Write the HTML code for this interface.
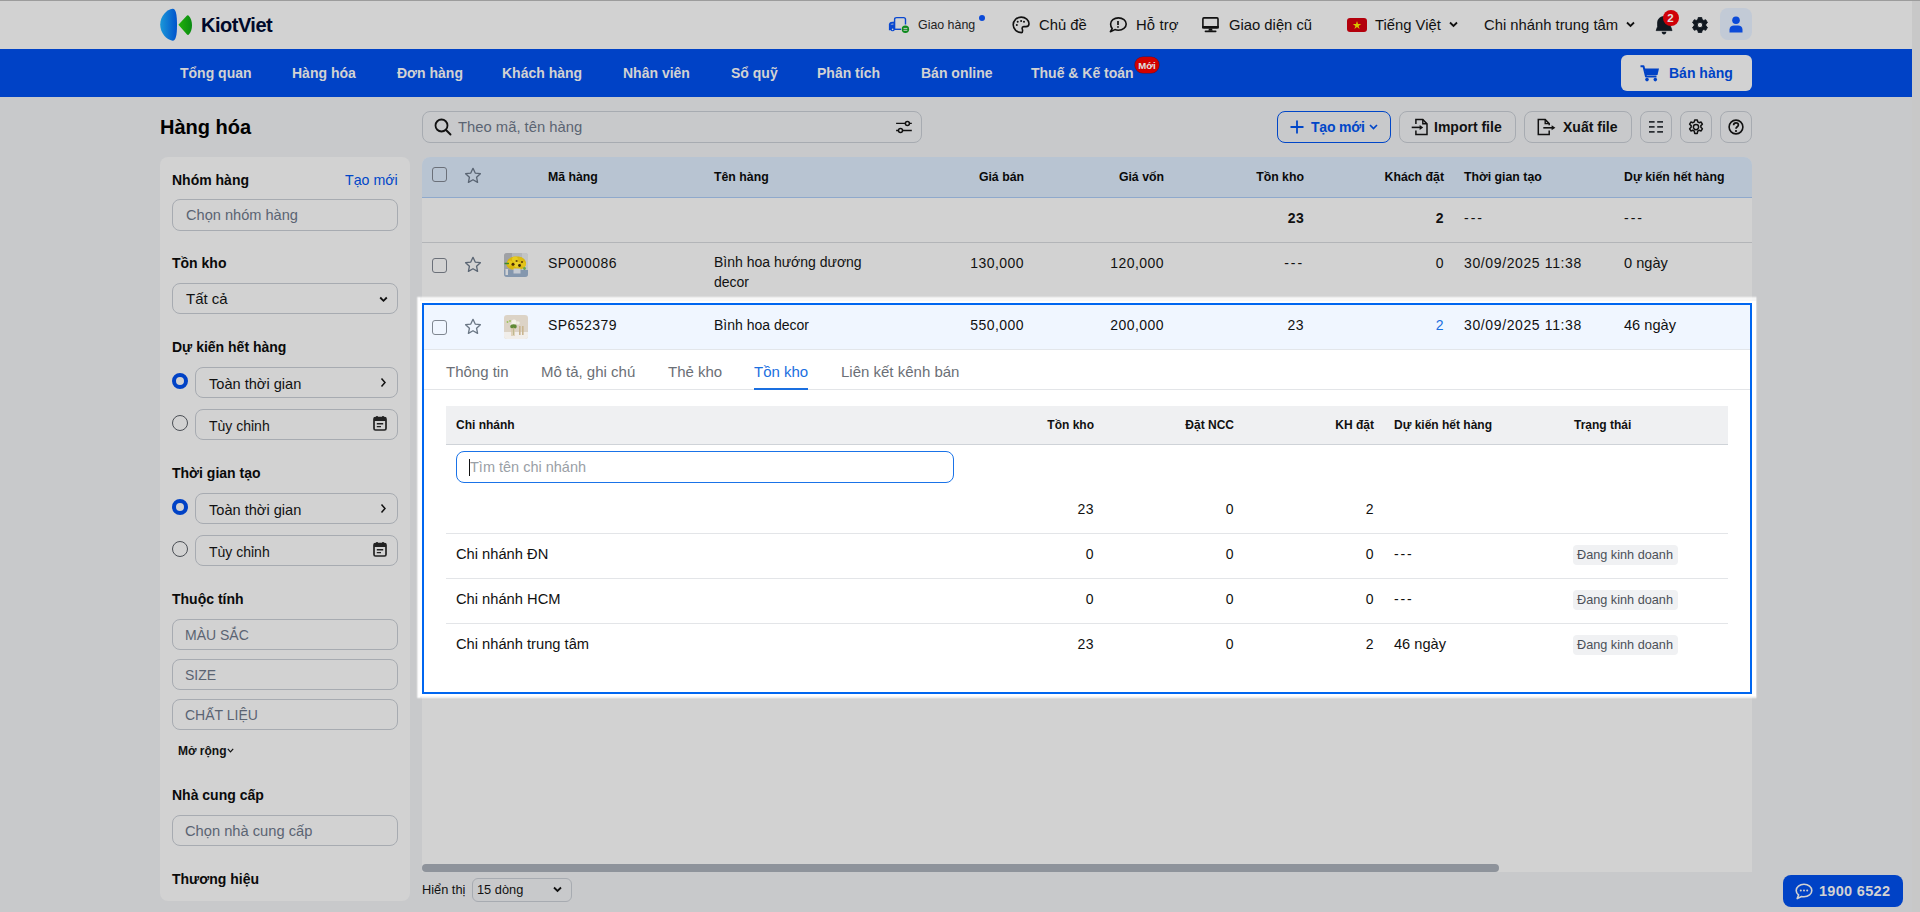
<!DOCTYPE html>
<html><head><meta charset="utf-8">
<style>
*{box-sizing:border-box;margin:0;padding:0}
html,body{width:1920px;height:912px;overflow:hidden}
body{background:#c8c9cb;font-family:"Liberation Sans",sans-serif;color:#0b0b0b;position:relative}
.abs{position:absolute}
.t{position:absolute;white-space:nowrap;line-height:1}
svg{display:block}
/* header */
#hdr{position:absolute;left:0;top:0;width:1912px;height:49px;background:#d2d2d2}
#hline{position:absolute;left:0;top:0;width:1920px;height:1px;background:#9c9c9c}
#vscroll{position:absolute;left:1912px;top:0;width:8px;height:912px;background:#c8c8c8}
#nav{position:absolute;left:0;top:49px;width:1912px;height:48px;background:#0042c6}
.nv{position:absolute;top:17px;font-size:14px;font-weight:700;color:#d2d2d2;white-space:nowrap;line-height:1}
.hi{position:absolute;font-size:14.8px;color:#111;white-space:nowrap;line-height:1;top:17.5px}
/* sidebar */
#side{position:absolute;left:160px;top:157px;width:250px;height:744px;background:#d2d2d2;border-radius:8px}
.lbl{position:absolute;left:12px;font-size:14px;font-weight:700;color:#0a0a0a;white-space:nowrap;line-height:1}
.inp{position:absolute;left:12px;width:226px;height:32px;border:1px solid #a7abb1;border-radius:8px}
.ph{position:absolute;left:13px;top:8px;font-size:14px;color:#5b6472;white-space:nowrap;line-height:1}
.radio{position:absolute;left:12px;width:16px;height:16px;border-radius:50%;border:1px solid #4b4f55}
.radio.on{border:4px solid #0042c6}
.box{position:absolute;left:35px;width:203px;height:31px;border:1px solid #a7abb1;border-radius:8px}
.box .tx{position:absolute;left:13px;top:9px;font-size:14px;color:#111;white-space:nowrap;line-height:1}
/* main */
#tbl{position:absolute;left:422px;top:157px;width:1330px;height:715px;background:#d2d2d2;border-radius:8px 8px 0 0}
#thead{position:absolute;left:0;top:0;width:1330px;height:41px;background:#b8c4d2;border-radius:8px 8px 0 0;border-bottom:1px solid #8fa9cc}
.th{position:absolute;top:14px;font-size:12.3px;font-weight:700;color:#0a0a0a;white-space:nowrap;line-height:1}
.cb{position:absolute;width:15px;height:15px;border:1.5px solid #6b7079;border-radius:3px}
.td{position:absolute;font-size:14px;color:#111;white-space:nowrap;line-height:1}
.num{letter-spacing:0.45px}
.r{text-align:right}
.btn{position:absolute;top:111px;height:32px;border:1px solid #a7abb1;border-radius:8px}
</style></head><body>
<div id="hdr">
  <!-- logo -->
  <svg class="abs" style="left:159px;top:8px" width="36" height="34" viewBox="0 0 36 34">
    <defs><linearGradient id="lg1" x1="0" y1="0" x2="1" y2="0"><stop offset="0" stop-color="#1b98d8"/><stop offset="1" stop-color="#0052cc"/></linearGradient>
    <linearGradient id="lg2" x1="0" y1="0" x2="1" y2="0"><stop offset="0" stop-color="#22b20a"/><stop offset="1" stop-color="#0a8a12"/></linearGradient></defs>
    <path d="M13.6 0.8 C8 1.5 1.2 8 1.2 16.6 C1.2 25 7.5 32 13.6 32.8 C16.6 33 18 28 18 16.8 C18 6 16.6 0.5 13.6 0.8 Z" fill="url(#lg1)"/>
    <path d="M19.4 16.8 L28 7.6 Q28.9 6.8 29.8 7.8 C32 10 33 13.5 33 17.2 C33 21 32 24.3 29.8 26.5 Q28.9 27.5 28 26.6 Z" fill="url(#lg2)"/>
  </svg>
  <div class="t" style="left:201px;top:15px;font-size:20px;font-weight:700;color:#00092a;letter-spacing:-0.5px">KiotViet</div>

  <!-- Giao hang -->
  <svg class="abs" style="left:884px;top:12px" width="30" height="25" viewBox="0 0 30 25">
    <path d="M10.6 17.3 V7.5 Q10.6 5.6 12.6 5.6 H19.6 Q21.5 5.6 21.5 7.5 V12.5" fill="none" stroke="#0a48d0" stroke-width="1.4"/>
    <path d="M10.6 17.3 H17" fill="none" stroke="#0a48d0" stroke-width="1.4"/>
    <path d="M4.9 18.3 V12.6 Q4.9 10.6 6.6 10.1 L10.9 9.6 V18.3 Z" fill="#0a48d0"/>
    <path d="M6.8 12 L9.4 11.4 V12.6 H6.8 Z" fill="#d2d2d2"/>
    <circle cx="8.6" cy="17.4" r="1.9" fill="#0a48d0"/><circle cx="8.6" cy="17.4" r="0.8" fill="#d2d2d2"/>
    <circle cx="21.4" cy="17.3" r="3.7" fill="#0c8a1c"/>
    <path d="M19.5 16.4 H23.3 M19.5 18.3 H23.3" stroke="#d2d2d2" stroke-width="0.9"/>
  </svg>
  <div class="t" style="left:918px;top:19px;font-size:12.4px;color:#222">Giao hàng</div>
  <div class="abs" style="left:979px;top:15px;width:6px;height:6px;border-radius:50%;background:#0b4ad8"></div>

  <!-- palette -->
  <svg class="abs" style="left:1012px;top:16px" width="18" height="18" viewBox="0 0 18 18">
    <path d="M9.5 16.6 C5 16.6 1.2 13.1 1.2 8.8 C1.2 4.5 4.8 1.1 9.2 1.1 C13.6 1.1 17 4.2 17 7.8 C17 9.6 15.7 10.6 14 10.6 H11.7 C10.7 10.6 10.1 11.3 10.1 12.3 C10.1 13.1 10.6 13.6 10.6 14.7 C10.6 15.9 10.2 16.6 9.5 16.6 Z" fill="none" stroke="#111" stroke-width="1.6" stroke-linejoin="round"/>
    <circle cx="5.7" cy="5.8" r="1" fill="#111"/><circle cx="9.1" cy="5" r="1" fill="#111"/><circle cx="12" cy="5.8" r="1" fill="#111"/><circle cx="4.8" cy="9" r="1" fill="#111"/>
  </svg>
  <div class="hi" style="left:1039px">Chủ đề</div>

  <!-- chat -->
  <svg class="abs" style="left:1109px;top:16px" width="19" height="18" viewBox="0 0 19 18">
    <path d="M3.2 12.6 C2.2 11.5 1.6 10 1.6 8.1 C1.6 4.6 5 1.9 9.4 1.9 C13.8 1.9 17.2 4.6 17.2 8.1 C17.2 11.6 13.8 14.2 9.4 14.2 C8.1 14.2 6.9 14 5.9 13.6 L1.4 15.7 Z" fill="none" stroke="#111" stroke-width="1.6" stroke-linejoin="round"/>
    <path d="M9 5 V8.9" stroke="#111" stroke-width="1.7"/><circle cx="9" cy="10.9" r="0.95" fill="#111"/>
  </svg>
  <div class="hi" style="left:1136px;letter-spacing:0.15px">Hỗ trợ</div>

  <!-- monitor -->
  <svg class="abs" style="left:1200px;top:16px" width="21" height="18" viewBox="0 0 21 18">
    <rect x="2.9" y="1.9" width="15.1" height="9.8" rx="1" fill="none" stroke="#111" stroke-width="1.6"/>
    <rect x="2.1" y="10" width="16.7" height="2.6" rx="0.6" fill="#111"/>
    <path d="M8.9 12.5 L8.4 14.8 H12.6 L12.1 12.5 Z" fill="#111"/>
    <rect x="4.6" y="14.6" width="11.9" height="1.7" rx="0.8" fill="#111"/>
  </svg>
  <div class="hi" style="left:1229px">Giao diện cũ</div>

  <!-- flag -->
  <div class="abs" style="left:1347px;top:18px;width:20px;height:14px;border-radius:3px;background:#b3000c"></div>
  <svg class="abs" style="left:1352px;top:20px" width="10" height="10" viewBox="0 0 10 10"><path d="M5 1 L6 4 L9.2 4 L6.6 5.9 L7.6 9 L5 7.1 L2.4 9 L3.4 5.9 L0.8 4 L4 4 Z" fill="#d8c400"/></svg>
  <div class="hi" style="left:1375px">Tiếng Việt</div>
  <svg class="abs" style="left:1449px;top:21px" width="9" height="7" viewBox="0 0 9 7"><path d="M1 1.5 L4.5 5 L8 1.5" fill="none" stroke="#111" stroke-width="1.8"/></svg>

  <div class="hi" style="left:1484px">Chi nhánh trung tâm</div>
  <svg class="abs" style="left:1626px;top:21px" width="9" height="7" viewBox="0 0 9 7"><path d="M1 1.5 L4.5 5 L8 1.5" fill="none" stroke="#111" stroke-width="1.8"/></svg>

  <!-- bell -->
  <svg class="abs" style="left:1655px;top:15px" width="19" height="21" viewBox="0 0 19 21">
    <path d="M9 1.6 C5 1.6 2.6 4.2 2.6 8 V11.5 L1.2 15.6 H17 L15.6 11.5 V8 C15.6 4.2 13 1.6 9 1.6 Z" fill="#111820" stroke="#111820" stroke-width="0.8" stroke-linejoin="round"/>
    <path d="M6.6 16.8 C6.9 18.6 7.8 19.6 9 19.6 C10.2 19.6 11.1 18.6 11.4 16.8 Z" fill="#111820"/>
  </svg>
  <div class="abs" style="left:1662.5px;top:10px;width:16px;height:16px;border-radius:50%;background:#d00008;color:#e0e0e0;font-size:11.5px;font-weight:700;text-align:center;line-height:16px">2</div>

  <!-- gear -->
  <svg class="abs" style="left:1692px;top:17px" width="16" height="16" viewBox="0 0 16 16">
    <path fill="#111820" fill-rule="evenodd" stroke="#111820" stroke-width="0.9" stroke-linejoin="round" d="M5.92 2.48 L6.30 0.39 L9.70 0.39 L10.08 2.48 L11.74 3.44 L13.74 2.72 L15.44 5.67 L13.82 7.04 L13.82 8.96 L15.44 10.33 L13.74 13.28 L11.74 12.56 L10.08 13.52 L9.70 15.61 L6.30 15.61 L5.92 13.52 L4.26 12.56 L2.26 13.28 L0.56 10.33 L2.18 8.96 L2.18 7.04 L0.56 5.67 L2.26 2.72 L4.26 3.44 Z M5.30 8.00 A2.7 2.7 0 1 0 10.70 8.00 A2.7 2.7 0 1 0 5.30 8.00 Z"/>
  </svg>

  <!-- avatar -->
  <div class="abs" style="left:1720px;top:8px;width:32px;height:32px;border-radius:8px;background:#c2cad6"></div>
  <svg class="abs" style="left:1729px;top:16px" width="14" height="17" viewBox="0 0 14 17">
    <circle cx="7" cy="4.2" r="3.8" fill="#0b4ad8"/>
    <path d="M0.5 16.5 V13.5 C0.5 11 2.5 9.5 5 9.5 H9 C11.5 9.5 13.5 11 13.5 13.5 V16.5 Z" fill="#0b4ad8"/>
  </svg>
</div>
<div id="vscroll"></div><div id="hline"></div>

<div id="nav">
  <div class="nv" style="left:180px">Tổng quan</div>
  <div class="nv" style="left:292px">Hàng hóa</div>
  <div class="nv" style="left:397px">Đơn hàng</div>
  <div class="nv" style="left:502px">Khách hàng</div>
  <div class="nv" style="left:623px">Nhân viên</div>
  <div class="nv" style="left:731px">Sổ quỹ</div>
  <div class="nv" style="left:817px">Phân tích</div>
  <div class="nv" style="left:921px">Bán online</div>
  <div class="nv" style="left:1031px">Thuế &amp; Kế toán</div>
  <div class="abs" style="left:1135px;top:8px;width:24px;height:16px;border-radius:8px;background:#d20000;box-shadow:0 0 0 0.6px #5a1030;color:#e0e0e0;font-size:9.6px;font-weight:700;text-align:center;line-height:17px">Mới</div>
  <div class="abs" style="left:1621px;top:6px;width:131px;height:36px;border-radius:6px;background:#d2d2d2"></div>
  <svg class="abs" style="left:1640px;top:16px" width="20" height="17" viewBox="0 0 20 17">
    <path d="M0.5 1.2 H3.5 L6 11.5 H16.5" fill="none" stroke="#0042c6" stroke-width="2" stroke-linejoin="round"/>
    <path d="M4.6 3.6 H19 L17.5 10 H6 Z" fill="#0042c6"/>
    <circle cx="7" cy="14.6" r="1.8" fill="#0042c6"/><circle cx="15.3" cy="14.6" r="1.8" fill="#0042c6"/>
  </svg>
  <div class="nv" style="left:1669px;top:17px;color:#0042c6">Bán hàng</div>
</div>

<div class="t" style="left:160px;top:117px;font-size:20px;font-weight:700;color:#000">Hàng hóa</div>

<!-- SIDEBAR -->
<div id="side">
  <div class="lbl" style="top:16px">Nhóm hàng</div>
  <div class="t" style="left:185px;top:16px;font-size:14.2px;color:#0046c8">Tạo mới</div>
  <div class="inp" style="top:42px"><div class="ph" style="top:8px;font-size:14.6px">Chọn nhóm hàng</div></div>

  <div class="lbl" style="top:99px">Tồn kho</div>
  <div class="inp" style="top:126px;height:31px"><div class="ph" style="color:#111;font-size:15px;top:7px">Tất cả</div>
    <svg class="abs" style="left:206px;top:12px" width="9" height="7" viewBox="0 0 9 7"><path d="M1.2 1.5 L4.5 4.8 L7.8 1.5" fill="none" stroke="#111" stroke-width="1.8"/></svg>
  </div>

  <div class="lbl" style="top:183px">Dự kiến hết hàng</div>
  <div class="radio on" style="top:216px"></div>
  <div class="box" style="top:210px"><div class="tx" style="font-size:14.6px">Toàn thời gian</div>
    <svg class="abs" style="left:184px;top:9px" width="7" height="11" viewBox="0 0 7 11"><path d="M1.5 1.5 L5 5.5 L1.5 9.5" fill="none" stroke="#111" stroke-width="1.5"/></svg></div>
  <div class="radio" style="top:258px"></div>
  <div class="box" style="top:252px"><div class="tx">Tùy chỉnh</div>
    <svg class="abs" style="left:177px;top:5px" width="14" height="16" viewBox="0 0 14 16"><rect x="1" y="2.5" width="12" height="12.5" rx="1.5" fill="none" stroke="#222" stroke-width="1.7"/><rect x="1" y="2.5" width="12" height="3.5" fill="#222"/><path d="M4 1 V3.5 M10 1 V3.5" stroke="#222" stroke-width="1.6"/><path d="M3.8 8.8 H10.2 M3.8 11.6 H8" stroke="#222" stroke-width="1.4"/></svg></div>

  <div class="lbl" style="top:309px">Thời gian tạo</div>
  <div class="radio on" style="top:342px"></div>
  <div class="box" style="top:336px"><div class="tx" style="font-size:14.6px">Toàn thời gian</div>
    <svg class="abs" style="left:184px;top:9px" width="7" height="11" viewBox="0 0 7 11"><path d="M1.5 1.5 L5 5.5 L1.5 9.5" fill="none" stroke="#111" stroke-width="1.5"/></svg></div>
  <div class="radio" style="top:384px"></div>
  <div class="box" style="top:378px"><div class="tx">Tùy chỉnh</div>
    <svg class="abs" style="left:177px;top:5px" width="14" height="16" viewBox="0 0 14 16"><rect x="1" y="2.5" width="12" height="12.5" rx="1.5" fill="none" stroke="#222" stroke-width="1.7"/><rect x="1" y="2.5" width="12" height="3.5" fill="#222"/><path d="M4 1 V3.5 M10 1 V3.5" stroke="#222" stroke-width="1.6"/><path d="M3.8 8.8 H10.2 M3.8 11.6 H8" stroke="#222" stroke-width="1.4"/></svg></div>

  <div class="lbl" style="top:435px">Thuộc tính</div>
  <div class="inp" style="top:462px;height:31px"><div class="ph" style="top:8px;left:12px">MÀU SẮC</div></div>
  <div class="inp" style="top:502px;height:31px"><div class="ph" style="top:8px;left:12px">SIZE</div></div>
  <div class="inp" style="top:542px;height:31px"><div class="ph" style="top:8px;left:12px">CHẤT LIỆU</div></div>
  <div class="t" style="left:18px;top:588px;font-size:12px;font-weight:700;color:#111">Mở rộng</div>
  <svg class="abs" style="left:67px;top:591px" width="7" height="5" viewBox="0 0 7 5"><path d="M0.8 0.8 L3.5 3.8 L6.2 0.8" fill="none" stroke="#111" stroke-width="1.2"/></svg>

  <div class="lbl" style="top:631px">Nhà cung cấp</div>
  <div class="inp" style="top:658px;height:31px"><div class="ph" style="top:8px;left:12px;font-size:14.7px">Chọn nhà cung cấp</div></div>
  <div class="lbl" style="top:715px">Thương hiệu</div>
</div>

<!-- TOOLBAR -->
<div class="abs" style="left:422px;top:111px;width:500px;height:32px;border:1px solid #a7abb1;border-radius:8px"></div>
<svg class="abs" style="left:434px;top:118px" width="18" height="18" viewBox="0 0 18 18"><circle cx="7.5" cy="7.5" r="6" fill="none" stroke="#111" stroke-width="1.8"/><path d="M12 12 L16.5 16.5" stroke="#111" stroke-width="1.9" stroke-linecap="round"/></svg>
<div class="t" style="left:458px;top:120px;font-size:14.8px;color:#5b6472">Theo mã, tên hàng</div>
<svg class="abs" style="left:894px;top:119px" width="19" height="16" viewBox="0 0 19 16"><path d="M2.1 4.4 H17.8 M2.1 11.5 H17.8" stroke="#111" stroke-width="1.4"/><circle cx="13.4" cy="4.4" r="2" fill="#d2d2d2" stroke="#111" stroke-width="1.5"/><circle cx="6.5" cy="11.5" r="2" fill="#d2d2d2" stroke="#111" stroke-width="1.5"/></svg>

<div class="btn" style="left:1277px;width:114px;border:1.5px solid #0046c8"></div>
<svg class="abs" style="left:1290px;top:120px" width="14" height="14" viewBox="0 0 14 14"><path d="M7 0.5 V13.5 M0.5 7 H13.5" stroke="#0046c8" stroke-width="1.8"/></svg>
<div class="t" style="left:1311px;top:120px;font-size:14px;font-weight:700;color:#0046c8;letter-spacing:-0.2px">Tạo mới</div>
<svg class="abs" style="left:1369px;top:124px" width="9" height="6" viewBox="0 0 9 6"><path d="M1 1 L4.5 4.5 L8 1" fill="none" stroke="#0046c8" stroke-width="1.7"/></svg>

<div class="btn" style="left:1399px;width:117px"></div>
<svg class="abs" style="left:1411px;top:118px" width="18" height="18" viewBox="0 0 18 18"><path d="M4.9 6 V1.6 H11.8 L16 5.8 V16.4 H4.9 V12.5" fill="none" stroke="#111" stroke-width="1.5" stroke-linejoin="miter"/><path d="M11.8 1.6 V5.8 H16" fill="none" stroke="#111" stroke-width="1.4"/><path d="M0.7 9.4 H9.5" stroke="#111" stroke-width="1.6"/><path d="M8.6 6.9 L12.2 9.4 L8.6 11.9 Z" fill="#111"/></svg>
<div class="t" style="left:1434px;top:120px;font-size:14px;font-weight:700;color:#111">Import file</div>

<div class="btn" style="left:1524px;width:108px"></div>
<svg class="abs" style="left:1537px;top:118px" width="20" height="18" viewBox="0 0 20 18"><path d="M12.2 7.2 V5.6 L8.2 1.6 H1.3 V16.4 H12.2 V12.4" fill="none" stroke="#111" stroke-width="1.5"/><path d="M8.2 1.6 V5.6 H12.2" fill="none" stroke="#111" stroke-width="1.4"/><path d="M6.3 9.8 H15.5" stroke="#111" stroke-width="1.6"/><path d="M14.6 7.3 L18.4 9.8 L14.6 12.3 Z" fill="#111"/></svg>
<div class="t" style="left:1563px;top:120px;font-size:14px;font-weight:700;color:#111">Xuất file</div>

<div class="btn" style="left:1640px;width:32px"></div>
<svg class="abs" style="left:1648px;top:120px" width="16" height="14" viewBox="0 0 16 14"><path d="M1 1.9 H6.6 M9.2 1.9 H15 M1 6.9 H6.6 M9.2 6.9 H15 M1 11.8 H6.6 M9.2 11.8 H15" stroke="#2a2e33" stroke-width="1.8"/></svg>
<div class="btn" style="left:1680px;width:32px"></div>
<svg class="abs" style="left:1687px;top:118px" width="18" height="18" viewBox="0 0 24 24"><path fill="none" stroke="#111" stroke-width="2" d="M12 8.5 A3.5 3.5 0 1 0 12 15.5 A3.5 3.5 0 1 0 12 8.5 Z M10.3 2.5 H13.7 L14.3 5.2 L16.2 6.3 L18.8 5.4 L20.5 8.3 L18.5 10.2 V12.4 L20.5 14.4 L18.8 17.3 L16.2 16.4 L14.3 17.5 L13.7 20.5 H10.3 L9.7 17.5 L7.8 16.4 L5.2 17.3 L3.5 14.4 L5.5 12.4 V10.2 L3.5 8.3 L5.2 5.4 L7.8 6.3 L9.7 5.2 Z" stroke-linejoin="round"/></svg>
<div class="btn" style="left:1720px;width:32px"></div>
<svg class="abs" style="left:1728px;top:119px" width="16" height="16" viewBox="0 0 16 16"><circle cx="8" cy="8" r="6.9" fill="none" stroke="#111" stroke-width="1.6"/><path d="M5.6 6.3 C5.6 4.8 6.6 3.9 8 3.9 C9.4 3.9 10.4 4.8 10.4 6 C10.4 7.6 8 7.9 8 9.7" fill="none" stroke="#111" stroke-width="1.7"/><circle cx="8" cy="12" r="1.1" fill="#111"/></svg>

<!-- TABLE -->
<div id="tbl">
  <div id="thead">
    <div class="cb" style="left:10px;top:10px"></div>
    <svg class="abs" style="left:42px;top:10px" width="18" height="17" viewBox="0 0 24 23"><path d="M12 1.8 L15 8.2 L22 9 L16.8 13.8 L18.2 20.8 L12 17.3 L5.8 20.8 L7.2 13.8 L2 9 L9 8.2 Z" fill="none" stroke="#5a6573" stroke-width="1.8" stroke-linejoin="round"/></svg>
    <div class="th" style="left:126px">Mã hàng</div>
    <div class="th" style="left:292px">Tên hàng</div>
    <div class="th r" style="left:502px;width:100px">Giá bán</div>
    <div class="th r" style="left:642px;width:100px">Giá vốn</div>
    <div class="th r" style="left:782px;width:100px">Tồn kho</div>
    <div class="th r" style="left:922px;width:100px">Khách đặt</div>
    <div class="th" style="left:1042px">Thời gian tạo</div>
    <div class="th" style="left:1202px">Dự kiến hết hàng</div>
  </div>
  <!-- summary row -->
  <div class="abs" style="left:0;top:85px;width:1330px;height:1px;background:#b3b5b8"></div>
  <div class="td r num" style="left:782px;top:54px;width:100px;font-weight:700;letter-spacing:0.3px">23</div>
  <div class="td r num" style="left:922px;top:54px;width:100px;font-weight:700">2</div>
  <div class="td" style="left:1042px;top:54px;letter-spacing:2px">---</div>
  <div class="td" style="left:1202px;top:54px;letter-spacing:2px">---</div>
  <!-- row 1 -->
  <div class="cb" style="left:10px;top:101px"></div>
  <svg class="abs" style="left:42px;top:99px" width="18" height="17" viewBox="0 0 24 23"><path d="M12 1.8 L15 8.2 L22 9 L16.8 13.8 L18.2 20.8 L12 17.3 L5.8 20.8 L7.2 13.8 L2 9 L9 8.2 Z" fill="none" stroke="#5a6573" stroke-width="1.8" stroke-linejoin="round"/></svg>
  <svg class="abs" style="left:82px;top:96px" width="24" height="24" viewBox="0 0 24 24">
    <defs><clipPath id="c1"><rect width="24" height="24" rx="3"/></clipPath></defs>
    <g clip-path="url(#c1)">
      <rect width="24" height="24" fill="#b4b6b9"/>
      <rect x="0" y="0" width="8" height="17" fill="#9fa1a5"/>
      <rect x="18" y="0" width="6" height="17" fill="#c2c4c6"/>
      <rect x="0" y="17" width="24" height="7" fill="#8497ae"/>
      <path d="M2.5 11 C3 6 7 3.5 12 3.5 C17 3 21.5 5.5 22 9.5 C22.5 13.5 19 17 13 17 C8 17 2 15 2.5 11 Z" fill="#d9b60e"/>
      <circle cx="6" cy="10" r="2.6" fill="#e6c81a"/><circle cx="11" cy="6.5" r="3" fill="#e8cc20"/><circle cx="16.5" cy="7" r="2.8" fill="#dcbc14"/><circle cx="19.5" cy="11.5" r="2.4" fill="#e2c41a"/><circle cx="13" cy="11.5" r="3" fill="#e9cf28"/>
      <circle cx="9" cy="11.2" r="1.5" fill="#4a2a06"/><circle cx="15.5" cy="12.5" r="1.4" fill="#3a2806"/><circle cx="12.6" cy="8" r="1.1" fill="#6a4a10"/><circle cx="18" cy="9" r="1" fill="#5a3a08"/>
      <path d="M0.5 10.5 H5" stroke="#3f8a2a" stroke-width="1.3"/><circle cx="20.5" cy="15.5" r="1.4" fill="#6aa84a"/>
      <rect x="9.5" y="15.5" width="7" height="5" fill="#c4cad2"/>
      <rect x="1.5" y="16" width="2.5" height="6" fill="#d0d2d4"/>
    </g>
  </svg>
  <div class="td num" style="left:126px;top:99px">SP000086</div>
  <div class="td" style="left:292px;top:99px;line-height:20px;top:95px">Bình hoa hướng dương<br>decor</div>
  <div class="td r num" style="left:502px;top:99px;width:100px">130,000</div>
  <div class="td r num" style="left:642px;top:99px;width:100px">120,000</div>
  <div class="td r num" style="left:782px;top:99px;width:100px;letter-spacing:1.9px">---</div>
  <div class="td r num" style="left:922px;top:99px;width:100px">0</div>
  <div class="td num" style="left:1042px;top:99px;letter-spacing:0.62px">30/09/2025 11:38</div>
  <div class="td" style="left:1202px;top:99px;font-size:14.6px">0 ngày</div>

  <!-- scrollbar -->
  <div class="abs" style="left:0;top:707px;width:1077px;height:8px;border-radius:4px;background:#8e939b"></div>
</div>

<!-- EXPANDED ROW (above overlay) -->
<div id="exp" class="abs" style="left:422px;top:303px;width:1330px;height:391px;background:#fff;border:2px solid #0066f0;box-shadow:-0.5px -1px 1.5px 5px #fff">
  <div class="abs" style="left:0;top:0;width:1326px;height:45px;background:#f0f6ff;border-bottom:1px solid #e3e6ea"></div>
  <div class="cb" style="left:8px;top:15px;border-color:#7f8690"></div>
  <svg class="abs" style="left:40px;top:13px" width="18" height="17" viewBox="0 0 24 23"><path d="M12 1.8 L15 8.2 L22 9 L16.8 13.8 L18.2 20.8 L12 17.3 L5.8 20.8 L7.2 13.8 L2 9 L9 8.2 Z" fill="none" stroke="#6b7785" stroke-width="1.8" stroke-linejoin="round"/></svg>
  <svg class="abs" style="left:80px;top:10px" width="24" height="24" viewBox="0 0 24 24">
    <defs><clipPath id="c2"><rect width="24" height="24" rx="3"/></clipPath></defs>
    <g clip-path="url(#c2)">
      <rect width="24" height="24" fill="#dcd3c6"/>
      <rect x="0" y="17" width="24" height="7" fill="#f1eeea"/>
      <circle cx="10" cy="7" r="2.5" fill="#f4f2e8"/><circle cx="14" cy="8" r="1.8" fill="#efeee2"/><circle cx="8" cy="9.5" r="1.6" fill="#f0efe6"/>
      <ellipse cx="9.5" cy="11.5" rx="3.2" ry="2.2" fill="#5f8a35"/>
      <path d="M9.5 12 V20" stroke="#7d9650" stroke-width="1"/>
      <rect x="7" y="13" width="4" height="8" fill="#d9c7a8" opacity="0.7"/>
      <rect x="15" y="11" width="1.6" height="9" fill="#c9b590"/>
      <rect x="18" y="11" width="1.6" height="9" fill="#c9b590"/>
      <circle cx="3.5" cy="7" r="0.9" fill="#9bc35a"/><circle cx="6" cy="6" r="0.9" fill="#9bc35a"/>
    </g>
  </svg>
  <div class="td num" style="left:124px;top:13px">SP652379</div>
  <div class="td" style="left:290px;top:13px">Bình hoa decor</div>
  <div class="td r num" style="left:500px;top:13px;width:100px">550,000</div>
  <div class="td r num" style="left:640px;top:13px;width:100px">200,000</div>
  <div class="td r num" style="left:780px;top:13px;width:100px">23</div>
  <div class="td r num" style="left:920px;top:13px;width:100px;color:#1a6fe0">2</div>
  <div class="td num" style="left:1040px;top:13px;letter-spacing:0.62px">30/09/2025 11:38</div>
  <div class="td" style="left:1200px;top:13px;font-size:14.6px">46 ngày</div>

  <!-- tabs -->
  <div class="abs" style="left:0;top:84px;width:1326px;height:1px;background:#e3e5e8"></div>
  <div class="t" style="left:22px;top:59px;font-size:15px;color:#6b6f76">Thông tin</div>
  <div class="t" style="left:117px;top:59px;font-size:15px;color:#6b6f76">Mô tả, ghi chú</div>
  <div class="t" style="left:244px;top:59px;font-size:15px;color:#6b6f76">Thẻ kho</div>
  <div class="t" style="left:330px;top:59px;font-size:15px;color:#1a6fe0">Tồn kho</div>
  <div class="abs" style="left:330px;top:83px;width:54px;height:2px;background:#1a6fe0"></div>
  <div class="t" style="left:417px;top:59px;font-size:15px;color:#6b6f76">Liên kết kênh bán</div>

  <!-- subtable -->
  <div class="abs" style="left:22px;top:101px;width:1282px;height:39px;background:#eff0f2;border-bottom:1px solid #cfd3d8"></div>
  <div class="t" style="left:32px;top:114px;font-size:12px;font-weight:700;color:#111">Chi nhánh</div>
  <div class="t r" style="left:570px;top:114px;width:100px;font-size:12px;font-weight:700;color:#111">Tồn kho</div>
  <div class="t r" style="left:710px;top:114px;width:100px;font-size:12px;font-weight:700;color:#111">Đặt NCC</div>
  <div class="t r" style="left:850px;top:114px;width:100px;font-size:12px;font-weight:700;color:#111">KH đặt</div>
  <div class="t" style="left:970px;top:114px;font-size:12px;font-weight:700;color:#111">Dự kiến hết hàng</div>
  <div class="t" style="left:1150px;top:114px;font-size:12px;font-weight:700;color:#111">Trạng thái</div>

  <div class="abs" style="left:32px;top:146px;width:498px;height:32px;border:1.5px solid #1a73e8;border-radius:8px"></div>
  <div class="abs" style="left:45px;top:154px;width:1px;height:17px;background:#111"></div>
  <div class="t" style="left:46px;top:155px;font-size:14.5px;color:#9aa0a6">Tìm tên chi nhánh</div>

  <div class="td r num" style="left:570px;top:197px;width:100px">23</div>
  <div class="td r num" style="left:710px;top:197px;width:100px">0</div>
  <div class="td r num" style="left:850px;top:197px;width:100px">2</div>
  <div class="abs" style="left:22px;top:228px;width:1282px;height:1px;background:#e3e5e8"></div>

  <div class="td" style="left:32px;top:242px;font-size:14.7px">Chi nhánh ĐN</div>
  <div class="td r num" style="left:570px;top:242px;width:100px">0</div>
  <div class="td r num" style="left:710px;top:242px;width:100px">0</div>
  <div class="td r num" style="left:850px;top:242px;width:100px">0</div>
  <div class="td" style="left:970px;top:242px;letter-spacing:1.9px">---</div>
  <div class="abs" style="left:1149px;top:240px;width:105px;height:20px;border-radius:4px;background:#f0f1f3"></div>
  <div class="t" style="left:1153px;top:244px;font-size:12.7px;color:#4b5058">Đang kinh doanh</div>
  <div class="abs" style="left:22px;top:273px;width:1282px;height:1px;background:#e3e5e8"></div>

  <div class="td" style="left:32px;top:287px;font-size:14.7px">Chi nhánh HCM</div>
  <div class="td r num" style="left:570px;top:287px;width:100px">0</div>
  <div class="td r num" style="left:710px;top:287px;width:100px">0</div>
  <div class="td r num" style="left:850px;top:287px;width:100px">0</div>
  <div class="td" style="left:970px;top:287px;letter-spacing:1.9px">---</div>
  <div class="abs" style="left:1149px;top:285px;width:105px;height:20px;border-radius:4px;background:#f0f1f3"></div>
  <div class="t" style="left:1153px;top:289px;font-size:12.7px;color:#4b5058">Đang kinh doanh</div>
  <div class="abs" style="left:22px;top:318px;width:1282px;height:1px;background:#e3e5e8"></div>

  <div class="td" style="left:32px;top:332px;font-size:14.7px">Chi nhánh trung tâm</div>
  <div class="td r num" style="left:570px;top:332px;width:100px">23</div>
  <div class="td r num" style="left:710px;top:332px;width:100px">0</div>
  <div class="td r num" style="left:850px;top:332px;width:100px">2</div>
  <div class="td" style="left:970px;top:332px;font-size:14.6px">46 ngày</div>
  <div class="abs" style="left:1149px;top:330px;width:105px;height:20px;border-radius:4px;background:#f0f1f3"></div>
  <div class="t" style="left:1153px;top:334px;font-size:12.7px;color:#4b5058">Đang kinh doanh</div>
</div>

<!-- footer -->
<div class="t" style="left:422px;top:884px;font-size:12.8px;color:#111">Hiển thị</div>
<div class="abs" style="left:472px;top:878px;width:100px;height:24px;border:1px solid #a7abb1;border-radius:6px"></div>
<div class="t" style="left:477px;top:884px;font-size:12.8px;color:#111">15 dòng</div>
<svg class="abs" style="left:553px;top:886px" width="9" height="7" viewBox="0 0 9 7"><path d="M1 1.5 L4.5 5 L8 1.5" fill="none" stroke="#111" stroke-width="1.8"/></svg>

<div class="abs" style="left:1783px;top:875px;width:120px;height:32px;border-radius:8px;background:#0042c6"></div>
<svg class="abs" style="left:1795px;top:883px" width="18" height="17" viewBox="0 0 18 17"><path d="M9 1.2 C4.6 1.2 1.2 4 1.2 7.5 C1.2 9.3 2.1 10.9 3.6 12 L2.2 15.6 L6.5 13.5 C7.3 13.7 8.1 13.8 9 13.8 C13.4 13.8 16.8 11 16.8 7.5 C16.8 4 13.4 1.2 9 1.2 Z" fill="none" stroke="#d2d2d2" stroke-width="1.6" stroke-linejoin="round"/><circle cx="5.8" cy="7.6" r="1" fill="#d2d2d2"/><circle cx="9" cy="7.6" r="1" fill="#d2d2d2"/><circle cx="12.2" cy="7.6" r="1" fill="#d2d2d2"/></svg>
<div class="t" style="left:1819px;top:884px;font-size:14.5px;font-weight:700;color:#d2d2d2;letter-spacing:0.3px">1900 6522</div>
</body></html>
